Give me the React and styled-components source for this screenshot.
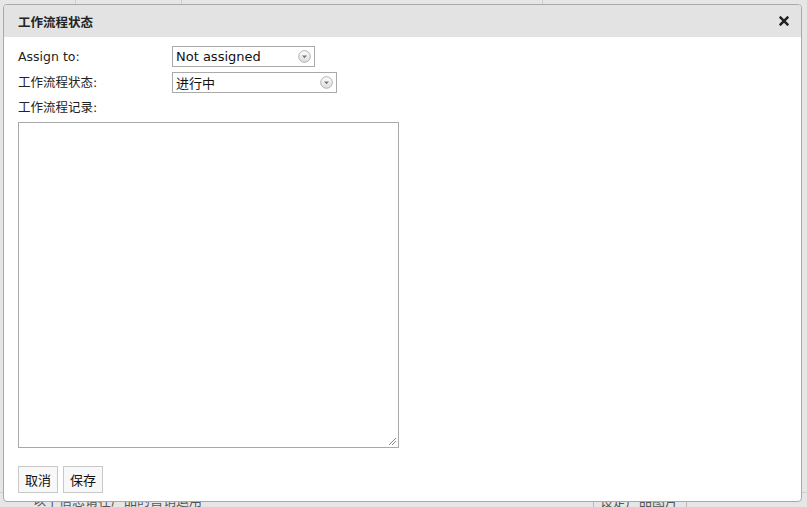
import React from "react";
import styled, { createGlobalStyle } from "styled-components";

const GlobalStyle = createGlobalStyle`
  html, body {
    margin: 0;
    padding: 0;
    background: #e6e6e6;
  }
  body {
    font-family: "DejaVu Sans", "Noto Sans CJK SC", sans-serif;
    color: #222;
  }
`;

const App = () => {
  return (
    <Page>
      <GlobalStyle />
      <Backdrop>
        <TopCells>
          <Cell width={75} />
          <Cell width={105} />
          <Cell width={360} />
        </TopCells>
        <Spacer />
        <BottomRow>
          <BottomText>以下信息请在产品的营销运用</BottomText>
          <BottomBox>设定产品图片</BottomBox>
        </BottomRow>
      </Backdrop>

      <Dialog>
        <Header>
          <Title>工作流程状态</Title>
          <Close aria-label="close">
            <svg width="10" height="10" viewBox="0 0 10 10">
              <path d="M1.6 1.6 L8.4 8.4 M8.4 1.6 L1.6 8.4" stroke="#222" strokeWidth="2.5" strokeLinecap="square" />
            </svg>
          </Close>
        </Header>
        <Body>
          <FormGrid>
            <Label>Assign to:</Label>
            <Select width={143}>
              <span>Not assigned</span>
              <Arrow />
            </Select>
            <Label>工作流程状态:</Label>
            <Select width={165}>
              <span>进行中</span>
              <Arrow />
            </Select>
          </FormGrid>
          <Label>工作流程记录:</Label>
          <Notes />
        </Body>
        <Footer>
          <Button>取消</Button>
          <Button>保存</Button>
        </Footer>
      </Dialog>
    </Page>
  );
};

const Arrow = () => (
  <ArrowIcon viewBox="0 0 13 13" width="13" height="13">
    <defs>
      <linearGradient id="ag" x1="0" y1="0" x2="0" y2="1">
        <stop offset="0" stopColor="#ffffff" />
        <stop offset="1" stopColor="#dcdcdc" />
      </linearGradient>
    </defs>
    <circle cx="6.5" cy="6.5" r="5.8" fill="url(#ag)" stroke="#a8a8a8" strokeWidth="0.9" />
    <path d="M4 5.6 L9 5.6 L6.5 8.2 Z" fill="#777" />
  </ArrowIcon>
);

//styled components
const Page = styled.div`
  position: relative;
  width: 807px;
  height: 507px;
  overflow: hidden;
  background: #e6e6e6;
`;

const Backdrop = styled.div`
  display: flex;
  flex-direction: column;
  height: 100%;
`;

const TopCells = styled.div`
  display: flex;
  height: 12px;
`;

const Cell = styled.div`
  width: ${(p) => p.width}px;
  border-right: 1px solid #cfcfcf;
`;

const Spacer = styled.div`
  flex: 1;
`;

const BottomRow = styled.div`
  display: flex;
  align-items: flex-start;
  height: 14px;
  padding-left: 33px;
  border-top: 1px solid #d0d0d0;
`;

const BottomText = styled.div`
  font-size: 13px;
  line-height: 16px;
  color: #555;
  width: 560px;
`;

const BottomBox = styled.div`
  font-size: 13px;
  line-height: 16px;
  color: #555;
  padding: 0 6px;
  border: 1px solid #bbb;
  border-bottom: none;
  width: 80px;
`;

const Dialog = styled.div`
  position: absolute;
  left: 3px;
  top: 4px;
  width: 797px;
  height: 496px;
  display: flex;
  flex-direction: column;
  background: #fff;
  border: 1px solid #a9a9a9;
  border-radius: 4px;
  overflow: hidden;
`;

const Header = styled.div`
  display: flex;
  align-items: center;
  justify-content: space-between;
  height: 32px;
  padding: 0 12px 0 14px;
  background: #e3e3e3;
`;

const Title = styled.h2`
  margin: 0;
  font-size: 12.5px;
  font-weight: bold;
  color: #222;
`;

const Close = styled.span`
  display: flex;
  align-items: center;
`;

const Body = styled.div`
  display: flex;
  flex-direction: column;
  align-items: flex-start;
  padding: 9px 14px 0;
`;

const FormGrid = styled.div`
  display: grid;
  grid-template-columns: 154px auto;
  row-gap: 5px;
  align-items: center;
  margin-bottom: 5px;
`;

const Label = styled.label`
  font-size: 12.5px;
  color: #222;
  line-height: 20px;
`;

const Select = styled.div`
  box-sizing: border-box;
  width: ${(p) => p.width}px;
  height: 21px;
  display: flex;
  align-items: center;
  justify-content: space-between;
  padding: 0 3px 0 3px;
  border: 1px solid #aaa;
  background: #fff;
  font-size: 13px;
  color: #111;
`;

const ArrowIcon = styled.svg`
  display: block;
`;

const Notes = styled.div`
  position: relative;
  box-sizing: border-box;
  width: 381px;
  height: 326px;
  margin-top: 4px;
  border: 1px solid #aaa;
  background: #fff;
  &::after {
    content: "";
    position: absolute;
    right: 2px;
    bottom: 2px;
    width: 7px;
    height: 7px;
    background: linear-gradient(
      135deg,
      transparent 45%,
      #888 45%,
      #888 52%,
      transparent 52%,
      transparent 70%,
      #888 70%,
      #888 77%,
      transparent 77%
    );
  }
`;

const Footer = styled.div`
  display: flex;
  gap: 5px;
  padding: 18px 14px 0;
`;

const Button = styled.button`
  box-sizing: border-box;
  height: 27px;
  padding: 0 6px;
  font-family: "DejaVu Sans", "Noto Sans CJK SC", sans-serif;
  font-size: 13px;
  color: #111;
  background: #f8f8f8;
  border: 1px solid #c8c8c8;
  border-radius: 0;
`;

export default App;
